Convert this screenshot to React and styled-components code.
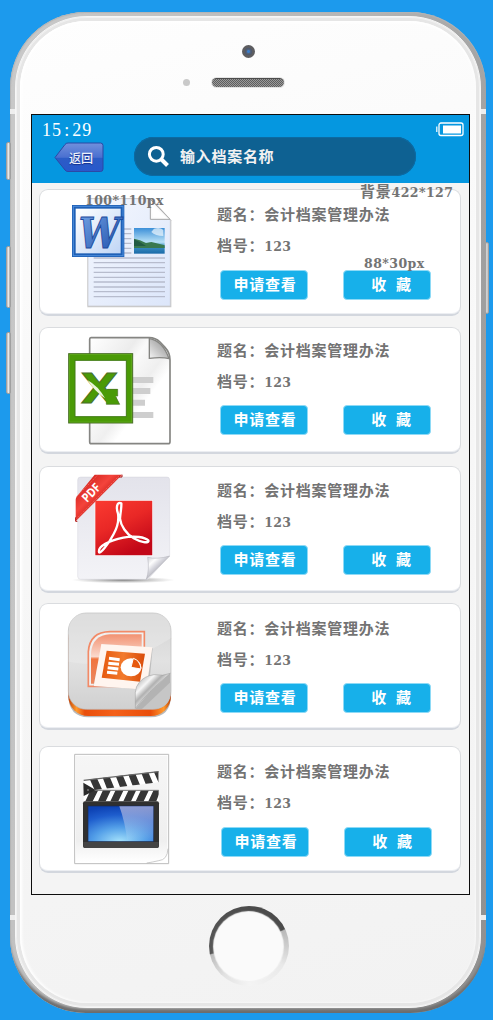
import React from "react";
import styled, { createGlobalStyle } from "styled-components";

const GlobalStyle = createGlobalStyle`
  * { box-sizing: border-box; }
  html, body { margin: 0; padding: 0; }
  body {
    background: #1c9aed;
    width: 493px;
    height: 1020px;
    overflow: hidden;
    font-family: "Noto Sans CJK SC", sans-serif;
  }
`;

const Page = styled.main`
  width: 493px;
  height: 1020px;
  padding: 12px 0 0 10px;
  background: #1c9aed;
`;

const Phone = styled.div`
  position: relative;
  width: 476px;
  height: 1001px;
  padding: 4px 5px 5px;
  border-radius: 76px;
  background: linear-gradient(100deg, #c9c9c9 0%, #c2c2c2 25%, #b4b4b4 55%, #8f8f8f 100%);
  box-shadow: inset 0 -6px 3px -2px #6d6d6d, inset 0 1px 1px #b4b4b4, inset 1px 0 1px #b9b9b9;
`;

const Bezel = styled.div`
  width: 466px;
  height: 992px;
  padding: 4px;
  border-radius: 72px;
  background: #e6e6e6;
  border: 1px solid #f6f6f6;
  box-shadow: inset 0 0 0 1px #f1f1f1;
`;

const Face = styled.div`
  display: flex;
  flex-direction: column;
  width: 456px;
  height: 982px;
  border-radius: 67px;
  background: linear-gradient(165deg, #fefefe 0%, #f9f9f9 30%, #f5f5f5 70%, #f2f2f2 100%);
  box-shadow: inset 2px 0 3px #ffffff, inset 0 2px 3px #ffffff;
`;

const SideButton = styled.i`
  position: absolute;
  left: ${(p) => p.$x}px;
  top: ${(p) => p.$y}px;
  width: ${(p) => p.$w}px;
  height: ${(p) => p.$h}px;
  border-radius: 2px;
  border: 1px solid #a0a0a0;
  background: linear-gradient(90deg, #b9b9b9, #ededed 55%, #999);
`;

const Antenna = styled.i`
  position: absolute;
  left: ${(p) => p.$x}px;
  top: ${(p) => p.$y}px;
  width: 5px;
  height: 5px;
  background: #eeeeee;
`;

const TopBezel = styled.div`
  display: flex;
  flex-direction: column;
  height: 93px;
  padding-top: 24px;
`;

const Camera = styled.div`
  width: 13px;
  height: 13px;
  margin-left: 222px;
  border-radius: 50%;
  border: 3px solid #5d5d60;
  background: radial-gradient(circle, #3a7cc8 0 1px, #53637c 2px, #46536a 4px);
`;

const EarRow = styled.div`
  display: flex;
  align-items: center;
  gap: 22px;
  margin-top: 19px;
  padding-left: 163px;
`;

const Sensor = styled.i`
  width: 7px;
  height: 7px;
  border-radius: 50%;
  background: #c9c9c9;
`;

const Speaker = styled.i`
  width: 72px;
  height: 9px;
  margin-top: 1px;
  border-radius: 5px;
  border-top: 1px solid #4c4c4c;
  background: repeating-conic-gradient(#5e5e5e 0 25%, #9a9a9a 0 50%) 0 0 / 2px 2px;
  box-shadow: 0 0 0 1px #e4e4e4;
`;

const Screen = styled.section`
  width: 439px;
  height: 781px;
  flex: none;
  margin-left: 11px;
  border: 1px solid #0d0d0d;
  background: #f4f4f4;
`;

const Header = styled.header`
  display: flex;
  flex-direction: column;
  height: 68px;
  background: #0597e0;
`;

const StatusRow = styled.div`
  display: flex;
  justify-content: space-between;
  height: 22px;
  padding: 7px 5px 0 10px;
`;

const Clock = styled.time`
  display: flex;
  color: #fff;
  font: 18px/17px "Liberation Serif", serif;
  letter-spacing: 1.1px;
`;

const Colon = styled.span`
  width: 10px;
  padding-left: 2px;
`;

const SearchRow = styled.div`
  display: flex;
  gap: 29px;
  padding-left: 22px;
`;

const BackButton = styled.button`
  display: grid;
  place-items: center;
  width: 51px;
  height: 31px;
  margin-top: 5px;
  padding: 0;
  border: 0;
  background: none;
  > * { grid-area: 1 / 1; }
`;

const BackLabel = styled.span`
  padding: 0 0 0 3px;
  color: #eef1fb;
  font: 500 12px/16px "Noto Sans CJK SC", sans-serif;
  text-shadow: 0 1px 1px #17318c;
`;

const SearchBox = styled.label`
  display: flex;
  align-items: center;
  gap: 10px;
  width: 282px;
  height: 39px;
  padding: 0 0 1px 13px;
  border-radius: 20px;
  background: #0e6192;
  box-shadow: inset 0 0 0 1px #0c6aa2;
  color: #f2f2f2;
  font: 700 15px/20px "Noto Sans CJK SC", sans-serif;
  letter-spacing: 0.72px;
`;

const List = styled.ul`
  display: flex;
  flex-direction: column;
  margin: 0;
  padding: 6px 0 0 7px;
  list-style: none;
`;

const Card = styled.li`
  position: relative;
  display: flex;
  flex: none;
  width: 422px;
  height: 127px;
  margin-bottom: ${(p) => p.$gap}px;
  border: 1px solid #dadcdf;
  border-bottom: 2px solid #d3d7de;
  border-radius: 9px;
  background: #fff;
  box-shadow: inset 0 -1px 0 #eceef2;
`;

const FileIcon = styled.svg`
  display: block;
  flex: none;
  width: 150px;
  height: 127px;
  margin: -1px 0 0 -1px;
`;

const Info = styled.div`
  display: flex;
  flex-direction: column;
  padding: ${(p) => p.$top}px 0 0 28px;
`;

const Line = styled.p`
  height: 20px;
  margin: 0 0 ${(p) => p.$after}px;
  color: #737373;
  font: 700 15px/20px "Noto Sans CJK SC", sans-serif;
  letter-spacing: 0.75px;
  white-space: nowrap;
`;

const Digits = styled.span`
  font: bold 12.5px/18px "DejaVu Serif", serif;
  letter-spacing: 0.3px;
`;

const Actions = styled.div`
  display: flex;
  gap: 35px;
  padding-left: ${(p) => p.$shift}px;
`;

const Action = styled.button`
  width: 88px;
  height: 30px;
  padding: 0 0 2px 2px;
  border: 1px solid #8edaf6;
  border-radius: 4px;
  background: #17b0ea;
  color: #fff;
  font: 700 15px/20px "Noto Sans CJK SC", sans-serif;
  letter-spacing: 0.75px;
  word-spacing: 5px;
  white-space: pre;
  text-indent: ${(p) => p.$indent || 0}px;
`;

const Note = styled.span`
  position: absolute;
  left: ${(p) => p.$x}px;
  top: ${(p) => p.$y}px;
  color: #737373;
  font: bold 12.5px/16px "DejaVu Serif", serif;
  letter-spacing: 0.45px;
  white-space: nowrap;
  z-index: 2;
`;

const NoteCjk = styled.span`
  font: 700 15px/16px "Noto Sans CJK SC", sans-serif;
  letter-spacing: 0.75px;
`;

const BottomBezel = styled.div`
  display: flex;
  justify-content: center;
  padding: 11px 0 0 1px;
`;

const HomeButton = styled.div`
  width: 80px;
  height: 80px;
  padding: 5.5px;
  border-radius: 50%;
  background: conic-gradient(#4b4b4b 0 64deg, #b9b9b9 66deg, #cdcdcd 90deg, #e9e9e9 120deg, #f4f4f4 180deg, #e2e2e2 220deg, #bcbcbc 257deg, #585858 259deg, #4b4b4b 360deg);
`;

const HomeFace = styled.div`
  width: 69px;
  height: 69px;
  border-radius: 50%;
  background: #fafafa;
  box-shadow: 0 0 1px 1px #f3f3f3;
`;

function WordIcon() {
  return (
    <FileIcon viewBox="27 27 450 381">
      <defs>
        <linearGradient id="wPage" x1="0" y1="0" x2="1" y2="1">
          <stop offset="0" stopColor="#f4f7fe" /><stop offset="1" stopColor="#dce6fa" />
        </linearGradient>
        <linearGradient id="wMark" x1="0" y1="0" x2="1" y2="1">
          <stop offset="0" stopColor="#7aa8e8" /><stop offset="1" stopColor="#1548a6" />
        </linearGradient>
        <linearGradient id="wBox" x1="0" y1="0" x2="1" y2="1">
          <stop offset="0" stopColor="#ffffff" /><stop offset="1" stopColor="#bfd5f5" />
        </linearGradient>
        <linearGradient id="wSky" x1="0" y1="0" x2="0" y2="1">
          <stop offset="0" stopColor="#3b8fd8" /><stop offset=".55" stopColor="#b9e1f6" /><stop offset=".7" stopColor="#3f93c5" /><stop offset="1" stopColor="#1a6aa8" />
        </linearGradient>
      </defs>
      <path d="M172 54H364L424 121V382H172Z" fill="#9c9c9c" opacity=".55" />
      <path d="M174 56H361L421 120V378H174Z" fill="url(#wPage)" stroke="#c8c8cc" strokeWidth="2" />
      <path d="M361 58V118H420Z" fill="#fbfbfb" stroke="#a5a5a5" strokeWidth="3" />
      <path d="M369 112L363 70L408 114Z" fill="#fff" />
      <path d="M280 147H304M280 161H304M280 176H304M280 190H304M280 205H304M280 219H304M191 234H405M191 248H405M191 263H405M191 277H405M191 292H405M191 306H405M191 321H405M191 335H405M191 350H405" stroke="#b7bccd" strokeWidth="4" />
      <rect x="312" y="144" width="92" height="77" fill="url(#wSky)" />
      <path d="M372 146q18-6 28 4v18q-24 0-36-12z" fill="#f1f8fd" opacity=".7" />
      <path d="M312 176l18 5 18 8 16-3 22 5 18 5v8H312z" fill="#39794f" />
      <path d="M312 178l16 7 20 13H312z" fill="#225b43" />
      <rect x="126" y="75" width="157" height="156" fill="#1f60b6" />
      <rect x="130" y="79" width="149" height="148" fill="none" stroke="#4c8ddb" strokeWidth="3" />
      <rect x="137" y="86" width="135" height="134" fill="url(#wBox)" />
      <text x="146" y="203" fontFamily="DejaVu Serif" fontWeight="bold" fontStyle="italic" fontSize="128" textLength="124" lengthAdjust="spacingAndGlyphs" fill="url(#wMark)" stroke="#1b4a9c" strokeWidth="3">W</text>
    </FileIcon>
  );
}

function ExcelIcon() {
  return (
    <FileIcon viewBox="27 21 450 381">
      <defs>
        <linearGradient id="xPage" x1="0" y1="0" x2="1" y2="1">
          <stop offset="0" stopColor="#fff" /><stop offset=".3" stopColor="#ececec" /><stop offset=".38" stopColor="#fafafa" /><stop offset=".55" stopColor="#efefef" /><stop offset=".65" stopColor="#fff" />
        </linearGradient>
        <linearGradient id="xFold" x1="0" y1="1" x2="1" y2="0">
          <stop offset="0" stopColor="#f5f5f5" /><stop offset=".5" stopColor="#bdbdbd" /><stop offset="1" stopColor="#8d8d8d" />
        </linearGradient>
      </defs>
      <path d="M183 53H358Q376 53 390 66L405 82Q420 98 420 120V365Q420 371 414 371H184Q179 371 179 365V58Q179 53 183 53Z" fill="url(#xPage)" stroke="#858582" strokeWidth="5" />
      <path d="M358 56Q398 62 417 116Q396 110 358 115Z" fill="url(#xFold)" stroke="#858582" strokeWidth="4" />
      <path d="M305 180H370M305 213H361M305 248H345M305 285H370" stroke="#cecece" strokeWidth="18" />
      <rect x="116" y="101" width="192" height="208" fill="#4a9a06" stroke="#4b6f28" strokeWidth="3" />
      <rect x="119" y="104" width="186" height="202" fill="none" stroke="#65ad20" strokeWidth="2" />
      <rect x="135" y="121" width="154" height="169" fill="#fff" stroke="#427c16" strokeWidth="3" />
      <text x="152" y="248" fontFamily="DejaVu Sans" fontWeight="bold" fontSize="121" textLength="112" lengthAdjust="spacingAndGlyphs" fill="#4a9a06" stroke="#4b6f28" strokeWidth="3">X</text>
      <path d="M232 207H263V228H257L269 253H229V244L214 222Z" fill="#4a9a06" />
      <path d="M232 208H263V228L258 232L269 253H229V247" fill="none" stroke="#4b6f28" strokeWidth="2" />
      <path d="M172 180Q205 198 225 235Q195 215 172 180Z" fill="#e8f6dc" />
    </FileIcon>
  );
}

function PdfIcon() {
  return (
    <FileIcon viewBox="27 18 450 381">
      <defs>
        <linearGradient id="pPage" x1="0" y1="0" x2="0" y2="1">
          <stop offset="0" stopColor="#e3e3eb" /><stop offset="1" stopColor="#f3f3f7" />
        </linearGradient>
        <linearGradient id="pRed" x1="0" y1="0" x2=".5" y2="1">
          <stop offset="0" stopColor="#fb3b31" /><stop offset=".5" stopColor="#e92826" /><stop offset="1" stopColor="#c20718" />
        </linearGradient>
        <linearGradient id="pRibbon" x1="0" y1="0" x2="1" y2="1">
          <stop offset=".2" stopColor="#d92a24" /><stop offset=".4" stopColor="#f4443c" /><stop offset=".55" stopColor="#d42520" />
        </linearGradient>
        <linearGradient id="pFold" x1="0" y1="0" x2=".55" y2=".6">
          <stop offset="0" stopColor="#c4c4cc" /><stop offset=".45" stopColor="#fdfdfd" /><stop offset=".7" stopColor="#d8d8df" /><stop offset="1" stopColor="#b2b2ba" />
        </linearGradient>
        <radialGradient id="pShadow"><stop offset="0" stopColor="#555" stopOpacity=".75" /><stop offset="1" stopColor="#888" stopOpacity="0" /></radialGradient>
      </defs>
      <ellipse cx="280" cy="360" rx="155" ry="10" fill="url(#pShadow)" />
      <path d="M152 51H411Q419 51 419 60V286L354 358H152Q143 358 143 349V60Q143 51 152 51Z" fill="url(#pPage)" stroke="#c9c9d0" strokeWidth="1" />
      <path d="M419 288L349 358Q359 330 353 292Q381 299 419 288Z" fill="url(#pFold)" stroke="#aaaab2" strokeWidth="1.5" />
      <rect x="195" y="121" width="173" height="166" fill="url(#pRed)" stroke="#fafafa" strokeWidth="2" />
      <path d="M274 130C260 124 258 144 264 161C267 181 264 199 251 222C235 254 207 286 207 276C204 259 236 242 280 233C315 226 345 232 355 241C359 252 330 246 311 235C289 222 272 197 270 176C271 160 275 142 274 130Z" fill="none" stroke="#fff" strokeWidth="7" strokeLinejoin="round" />
      <path d="M194 44H276L137 184V119Q137 114 141 109Z" fill="url(#pRibbon)" />
      <path d="M201 47L139 111M266 49L139 177" stroke="#fa9b91" strokeWidth="1.5" strokeDasharray="4 3" />
      <path d="M267 51H276V44M137 172V184H142" fill="none" stroke="#ad1211" strokeWidth="3" />
      <text transform="translate(171 129) rotate(-46)" fontFamily="Open Sans" fontWeight="bold" fontSize="37" textLength="62" lengthAdjust="spacingAndGlyphs" fill="#fff">PDF</text>
    </FileIcon>
  );
}

function SlidesIcon() {
  return (
    <FileIcon viewBox="27 24 450 381">
      <defs>
        <linearGradient id="sTile" x1="0" y1="0" x2="0" y2="1">
          <stop offset="0" stopColor="#d2d2d2" /><stop offset=".5" stopColor="#e2e2e2" /><stop offset="1" stopColor="#d0d0d0" />
        </linearGradient>
        <linearGradient id="sBase" x1="0" y1="0" x2="1" y2="0">
          <stop offset="0" stopColor="#c34106" /><stop offset=".08" stopColor="#ff9a2e" /><stop offset=".16" stopColor="#e94e0b" /><stop offset=".45" stopColor="#f4611a" /><stop offset=".8" stopColor="#e94e0b" /><stop offset=".93" stopColor="#ff9a2e" /><stop offset="1" stopColor="#b93e07" />
        </linearGradient>
        <linearGradient id="sBack" x1="0" y1="0" x2="0" y2="1">
          <stop offset="0" stopColor="#f29272" /><stop offset=".45" stopColor="#fad9cd" /><stop offset=".5" stopColor="#f0743e" /><stop offset="1" stopColor="#ec8860" />
        </linearGradient>
        <linearGradient id="sPanel" x1="0" y1="0" x2="1" y2="0">
          <stop offset="0" stopColor="#e6590e" /><stop offset=".5" stopColor="#f27a2d" /><stop offset="1" stopColor="#d94b09" />
        </linearGradient>
        <linearGradient id="sFold" gradientUnits="userSpaceOnUse" x1="330" y1="245" x2="378" y2="293">
          <stop offset="0" stopColor="#b4b4b4" /><stop offset=".4" stopColor="#f6f6f6" /><stop offset=".65" stopColor="#b0b0b0" /><stop offset=".85" stopColor="#dedede" /><stop offset="1" stopColor="#8b8b8b" />
        </linearGradient>
      </defs>
      <path d="M115 300H423Q423 366 362 367H176Q115 366 115 300Z" fill="#8b8b8b" opacity=".6" />
      <rect x="115" y="70" width="308" height="293" rx="60" fill="url(#sBase)" />
      <rect x="115" y="54" width="308" height="289" rx="54" fill="url(#sTile)" stroke="#bababa" strokeWidth="2" />
      <path d="M116 200Q270 230 422 130V110Q420 56 369 55H169Q116 56 116 110Z" fill="#ececec" opacity=".45" />
      <path d="M175 274V170Q179 111 240 110H343V274Z" fill="#f0f0f0" stroke="#f28a67" strokeWidth="5" />
      <path d="M183 266V174Q188 120 240 118H335V266Z" fill="url(#sBack)" />
      <path d="M216 148L368 159L356 284L190 273Z" fill="#9b9b9b" opacity=".5" />
      <path d="M214 147L367 157L349 284L191 273Z" fill="#fff5ef" />
      <path d="M230 167L345 176L330 260L215 248Z" fill="url(#sPanel)" />
      <path d="M237 190L269 194M235 205L267 208M233 218L265 222M231 232L262 235" stroke="#fff" strokeWidth="9" />
      <ellipse cx="303" cy="217" rx="31" ry="27" fill="#fff" />
      <path d="M303 217L310 190Q330 196 333 222Z" fill="#e6590e" stroke="#fff" strokeWidth="3" />
      <path d="M421 235V293Q419 340 369 342H316L360 290Z" fill="#b3b3b3" />
      <path d="M421 262V298Q416 341 369 342H336Z" fill="#c6c6c6" />
      <path d="M421 235Q399 244 372 239Q343 243 328 262Q317 274 316 292V340Q352 292 421 235Z" fill="url(#sFold)" stroke="#999" strokeWidth="1.5" />
    </FileIcon>
  );
}

function VideoIcon() {
  return (
    <FileIcon viewBox="27 18 450 381">
      <defs>
        <linearGradient id="vPage" x1="0" y1="0" x2="0" y2="1">
          <stop offset="0" stopColor="#f6f6f6" /><stop offset=".8" stopColor="#efefef" /><stop offset="1" stopColor="#fff" />
        </linearGradient>
        <radialGradient id="vBlue" cx=".48" cy="1" r="1">
          <stop offset="0" stopColor="#a5e2fb" /><stop offset=".4" stopColor="#539fe8" /><stop offset=".75" stopColor="#1e5dcd" /><stop offset="1" stopColor="#0d42b4" />
        </radialGradient>
        <linearGradient id="vGlare" x1="0" y1="0" x2="0" y2="1">
          <stop offset="0" stopColor="#c3c1e0" stopOpacity=".7" /><stop offset="1" stopColor="#fff" stopOpacity="0" />
        </linearGradient>
        <clipPath id="vTop"><path d="M161 120L386 94V127L195 150L161 135Z" /></clipPath>
        <clipPath id="vLow"><path d="M161 184V151H386V184Z" /></clipPath>
      </defs>
      <path d="M134 43H416V371H134Z" fill="#fff" stroke="#bcbcbc" strokeWidth="3" />
      <path d="M138 47H412V330Q410 362 350 367H138Z" fill="url(#vPage)" />
      <path d="M414 334Q406 362 350 369H414Z" fill="#fff" />
      <path d="M414 326Q412 360 386 362Q365 367 350 369" fill="none" stroke="#b1b1b1" strokeWidth="2" />
      <g clipPath="url(#vTop)">
        <path d="M155 90H390V155H155Z" fill="#fff" />
        <path d="M178 115H201L217 150H194ZM217 110H239L254 146H231ZM256 105H278L293 141H270ZM294 101H316L331 137H308ZM333 97H355L370 132H347ZM370 92H392L400 128H386Z" fill="#363636" />
      </g>
      <path d="M161 121L386 95" stroke="#666" strokeWidth="4" />
      <g clipPath="url(#vLow)">
        <path d="M155 150H390V190H155Z" fill="#fff" />
        <path d="M165 186L182 150H205L187 186ZM203 186L219 150H243L226 186ZM240 186L257 150H281L264 186ZM279 186L296 150H319L302 186ZM316 186L333 150H357L340 186ZM354 186L371 150H388V160L378 186Z" fill="#363636" />
      </g>
      <path d="M194 151H386" stroke="#777" strokeWidth="3" />
      <path d="M160 128L197 150L161 168Z" fill="#2a2a2a" />
      <circle cx="174" cy="150" r="3" fill="#777" />
      <rect x="159" y="184" width="228" height="140" rx="6" fill="#303030" />
      <path d="M160 306H386V318Q386 324 380 324H166Q160 324 160 318Z" fill="#444" />
      <rect x="174" y="198" width="197" height="107" fill="url(#vBlue)" stroke="#1c2c50" strokeWidth="2" />
      <path d="M268 199H370V304H292Q285 245 268 199Z" fill="url(#vGlare)" />
    </FileIcon>
  );
}

const files = [
  { Icon: WordIcon, top: 14, mid: 11, end: 15, shift: 3, gap: 11 },
  { Icon: ExcelIcon, top: 12, mid: 11, end: 14, shift: 3, gap: 12 },
  { Icon: PdfIcon, top: 13, mid: 11, end: 14, shift: 3, gap: 10 },
  { Icon: SlidesIcon, top: 14, mid: 11, end: 14, shift: 3, gap: 16 },
  { Icon: VideoIcon, top: 14, mid: 11, end: 15, shift: 4, gap: 0 },
];

function FileCard({ file, children }) {
  const { Icon } = file;
  return (
    <Card $gap={file.gap}>
      <Icon />
      <Info $top={file.top}>
        <Line $after={file.mid}>题名：会计档案管理办法</Line>
        <Line $after={file.end}>档号：<Digits>123</Digits></Line>
        <Actions $shift={file.shift}>
          <Action>申请查看</Action>
          <Action $indent={7}>收 藏</Action>
        </Actions>
      </Info>
      {children}
    </Card>
  );
}

export default function App() {
  return (
    <Page>
      <GlobalStyle />
      <Phone>
        <SideButton $x={-4} $y={130} $w={5} $h={38} />
        <SideButton $x={-4} $y={234} $w={5} $h={62} />
        <SideButton $x={-4} $y={320} $w={5} $h={62} />
        <SideButton $x={475} $y={230} $w={4} $h={72} />
        <Antenna $x={0} $y={97} />
        <Antenna $x={471} $y={97} />
        <Antenna $x={0} $y={903} />
        <Antenna $x={471} $y={903} />
        <Bezel>
          <Face>
            <TopBezel>
              <Camera />
              <EarRow>
                <Sensor />
                <Speaker />
              </EarRow>
            </TopBezel>
            <Screen>
              <Header>
                <StatusRow>
                  <Clock>15<Colon>:</Colon>29</Clock>
                  <svg width="28" height="15" viewBox="0 0 28 15">
                    <path d="M.8 4.500V10" stroke="#fff" strokeWidth="1.2" />
                    <rect x="3" y="1" width="24" height="12.500" rx="2" fill="none" stroke="#fff" strokeWidth="1.300" />
                    <rect x="7" y="3.500" width="18" height="8" fill="#fff" />
                  </svg>
                </StatusRow>
                <SearchRow>
                  <BackButton>
                    <svg width="51" height="31" viewBox="0 0 51 31">
                      <defs>
                        <linearGradient id="back" x1="0" y1="0" x2="0" y2="1">
                          <stop offset="0" stopColor="#7190dc" /><stop offset=".5" stopColor="#4a70d0" /><stop offset=".54" stopColor="#2c5cc6" /><stop offset="1" stopColor="#2858cc" />
                        </linearGradient>
                      </defs>
                      <path d="M1 15.500L11 2.500Q12 1 14 1H46.500Q49 1 49 3.500V27Q49 29.500 46.500 29.500H14Q12 29.500 11 28Z" fill="url(#back)" stroke="#2b49a5" />
                    </svg>
                    <BackLabel>返回</BackLabel>
                  </BackButton>
                  <SearchBox>
                    <svg width="23" height="23" viewBox="0 0 23 23">
                      <circle cx="9.300" cy="9.300" r="6.900" fill="none" stroke="#fff" strokeWidth="3" />
                      <path d="M14 14L20.500 20.500" stroke="#fff" strokeWidth="4" />
                    </svg>
                    <span>输入档案名称</span>
                  </SearchBox>
                </SearchRow>
              </Header>
              <List>
                <FileCard file={files[0]}>
                  <Note $x={45} $y={3}>100*110px</Note>
                  <Note $x={320} $y={-7}><NoteCjk>背景</NoteCjk>422*127</Note>
                  <Note $x={324} $y={66}>88*30px</Note>
                </FileCard>
                {files.slice(1).map((file, i) => (
                  <FileCard key={i} file={file} />
                ))}
              </List>
            </Screen>
            <BottomBezel>
              <HomeButton>
                <HomeFace />
              </HomeButton>
            </BottomBezel>
          </Face>
        </Bezel>
      </Phone>
    </Page>
  );
}
